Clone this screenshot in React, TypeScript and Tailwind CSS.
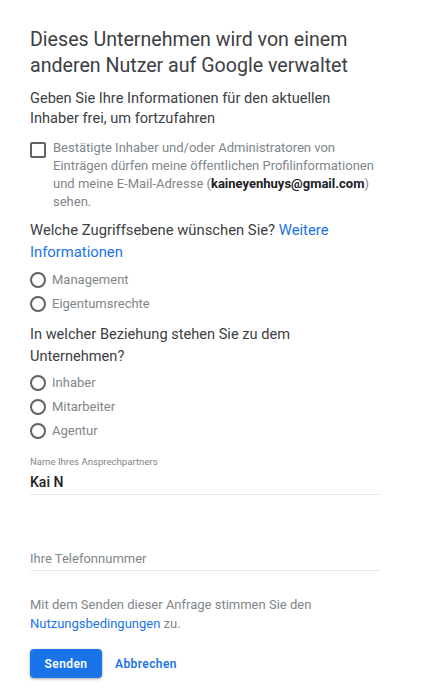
import React from "react";

function Radio({ label }: { label: string }) {
  return (
    <div className="flex items-center h-[24px]">
      <span className="w-[16px] h-[16px] rounded-full border-2 border-[#5f6368] box-border" />
      <span className="ml-[6px] text-[13px] text-[#80868b]">{label}</span>
    </div>
  );
}

export default function App() {
  return (
    <div className="w-[423px] h-[696px] bg-white overflow-hidden" style={{ fontFamily: "Roboto, 'Liberation Sans', sans-serif" }}>
      <div className="pl-[30px] pr-[43px] pt-[27px]">
        <h1 className="text-[19.6px] leading-[26px] text-[#3c4043]">
          Dieses Unternehmen wird von einem anderen Nutzer auf Google verwaltet
        </h1>
        <p className="mt-[9px] text-[14.6px] leading-[20px] text-[#3c4043]">
          Geben Sie Ihre Informationen für den aktuellen Inhaber frei, um fortzufahren
        </p>
        <div className="mt-[11px] flex items-start">
          <span className="mt-[3px] shrink-0 w-[16px] h-[16px] rounded-[2px] border-2 border-[#5f6368] box-border" />
          <p className="ml-[7px] text-[13px] leading-[18px] text-[#80868b]">
            Bestätigte Inhaber und/oder Administratoren von Einträgen dürfen meine öffentlichen Profilinformationen und meine E-Mail-Adresse (<span className="font-bold text-[#202124]">kaineyenhuys@gmail.com</span>) sehen.
          </p>
        </div>
        <p className="mt-[8px] text-[14.8px] leading-[22px] text-[#3c4043]">
          Welche Zugriffsebene wünschen Sie? <span className="text-[#1a73e8]">Weitere Informationen</span>
        </p>
        <div className="mt-[5px] flex flex-col">
          <Radio label="Management" />
          <Radio label="Eigentumsrechte" />
        </div>
        <p className="mt-[7px] text-[14.6px] leading-[22px] text-[#3c4043]">
          In welcher Beziehung stehen Sie zu dem Unternehmen?
        </p>
        <div className="mt-[4px] flex flex-col">
          <Radio label="Inhaber" />
          <Radio label="Mitarbeiter" />
          <Radio label="Agentur" />
        </div>
        <div className="mt-[13px] w-[350px]">
          <div className="text-[9.6px] leading-[12px] text-[#80868b]">Name Ihres Ansprechpartners</div>
          <div className="mt-[5px] text-[14px] leading-[18px] font-medium text-[#202124] pb-[3px] border-b border-[#e8eaed]">Kai N</div>
        </div>
        <div className="mt-[55px] w-[350px]">
          <div className="text-[13px] leading-[18px] text-[#80868b] pb-[2px] border-b border-[#e8eaed]">Ihre Telefonnummer</div>
        </div>
        <p className="mt-[24px] text-[13px] leading-[19px] text-[#80868b]">
          Mit dem Senden dieser Anfrage stimmen Sie den <br />
          <span className="text-[#1a73e8]">Nutzungsbedingungen</span> zu.
        </p>
        <div className="mt-[16px] flex items-center">
          <button className="w-[72px] h-[29px] rounded-[4px] bg-[#1a73e8] text-white text-[12px] font-semibold tracking-[0.4px] shadow-[0_1px_3px_rgba(0,0,0,0.35)]">
            Senden
          </button>
          <span className="ml-[13px] text-[12px] font-semibold tracking-[0.4px] text-[#1a73e8]">Abbrechen</span>
        </div>
      </div>
    </div>
  );
}
